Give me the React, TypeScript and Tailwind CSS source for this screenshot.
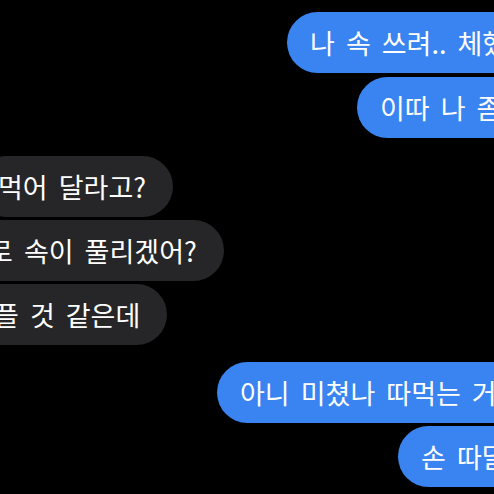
import React from 'react';

type Msg = { text: string; mine: boolean; offset: string; gap: string };

const messages: Msg[] = [
  { text: '나 속 쓰려.. 체했나봐', mine: true, offset: 'ml-[287px]', gap: 'mt-[12px]' },
  { text: '이따 나 좀 데리러 와', mine: true, offset: 'ml-[357px]', gap: 'mt-[4px]' },
  { text: '먹어 달라고?', mine: false, offset: '-ml-[24px]', gap: 'mt-[18px]' },
  { text: '로 속이 풀리겠어?', mine: false, offset: '-ml-[34px]', gap: 'mt-[3px]' },
  { text: '플 것 같은데', mine: false, offset: '-ml-[28px]', gap: 'mt-[3px]' },
  { text: '아니 미쳤나 따먹는 거 말고', mine: true, offset: 'ml-[217px]', gap: 'mt-[17px]' },
  { text: '손 따달라고', mine: true, offset: 'ml-[398px]', gap: 'mt-[3px]' },
];

const Bubble: React.FC<{ msg: Msg }> = ({ msg }) => (
  <div className={`flex ${msg.gap}`}>
    <div
      className={`${msg.offset} h-[61px] shrink-0 flex items-center whitespace-nowrap rounded-full text-white text-[27px] leading-none [word-spacing:5px] ${
        msg.mine ? 'bg-[#3a84f2] pl-[23px] pr-[22px]' : 'bg-[#262628] pl-[22px] pr-[27px]'
      }`}
    >
      {msg.text}
    </div>
  </div>
);

export default function App() {
  return (
    <div
      className="w-[494px] h-[494px] bg-black overflow-hidden flex flex-col"
      style={{ fontFamily: '"Noto Sans CJK KR", "Noto Sans", sans-serif' }}
    >
      {messages.map((m, i) => (
        <Bubble key={i} msg={m} />
      ))}
    </div>
  );
}
